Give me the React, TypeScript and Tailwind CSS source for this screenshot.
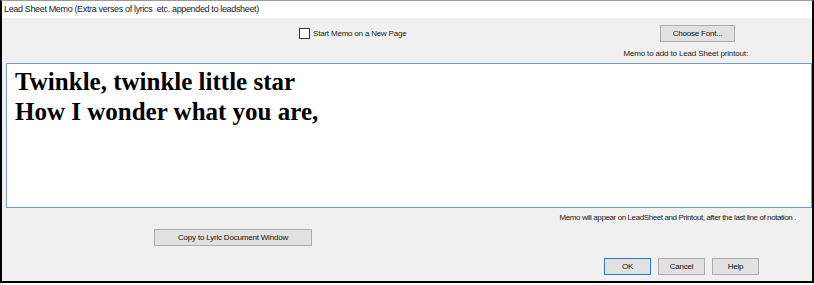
import { ReactNode } from "react";

function WinButton({ children, className, isDefault }: { children: ReactNode; className?: string; isDefault?: boolean }) {
  return (
    <button
      type="button"
      className={
        "flex h-[17px] items-center justify-center bg-[#e1e1e1] text-[8px] tracking-[-0.2px] text-[#111] " +
        (isDefault ? "border border-[#2a78c6] " : "border border-[#adadad] ") +
        (className ?? "")
      }
    >
      {children}
    </button>
  );
}

export default function App() {
  return (
    <div className="h-[285px] w-[814px] bg-white" style={{ fontFamily: '"Liberation Sans", Arial, sans-serif' }}>
      <div className="flex h-[283px] w-[814px] flex-col border-x-2 border-b-2 border-t border-x-black border-b-black border-t-[#9a9a9a] bg-[#f0f0f0]">
        {/* title */}
        <div className="flex h-[17px] items-center bg-white pl-[2px] text-[9px] tracking-[-0.35px] text-[#222]">
          Lead Sheet Memo (Extra verses of lyrics&nbsp; etc. appended to leadsheet)
        </div>

        {/* option row */}
        <div className="mt-[7px] flex h-[17px] items-center">
          <div className="ml-[297px] w-[361px]">
            <label className="flex items-center gap-[3px] text-[8px] tracking-[-0.2px] text-[#222]">
              <span className="h-[11px] w-[11px] border border-[#333] bg-white" />
              Start Memo on a New Page
            </label>
          </div>
          <WinButton className="w-[75px]">Choose Font...</WinButton>
        </div>

        <div className="mt-[5px] flex h-[14px] items-center justify-end pr-[64px] text-[8px] tracking-[-0.15px] text-[#222]">
          Memo to add to Lead Sheet printout:
        </div>

        {/* memo box */}
        <div
          className="ml-[4px] mt-[2px] h-[145px] border border-[#7a9bbb] bg-white pl-[8px] pt-[3px] text-[25px] font-bold leading-[30px] text-black"
          style={{ fontFamily: '"Liberation Serif", "Times New Roman", serif' }}
        >
          <div>Twinkle, twinkle little star</div>
          <div>How I wonder what you are,</div>
        </div>

        <div className="mt-[3px] flex h-[14px] items-center justify-end pr-[16px] text-[8px] tracking-[-0.4px] text-[#222]">
          Memo will appear on LeadSheet and Printout, after the last line of notation .
        </div>

        <div className="mt-[4px] flex">
          <WinButton className="ml-[152px] w-[158px]">Copy to Lyric Document Window</WinButton>
        </div>

        <div className="mt-[12px] flex gap-[7px] pl-[602px]">
          <WinButton isDefault className="w-[47px]">OK</WinButton>
          <WinButton className="w-[47px]">Cancel</WinButton>
          <WinButton className="w-[47px]">Help</WinButton>
        </div>
      </div>
    </div>
  );
}
